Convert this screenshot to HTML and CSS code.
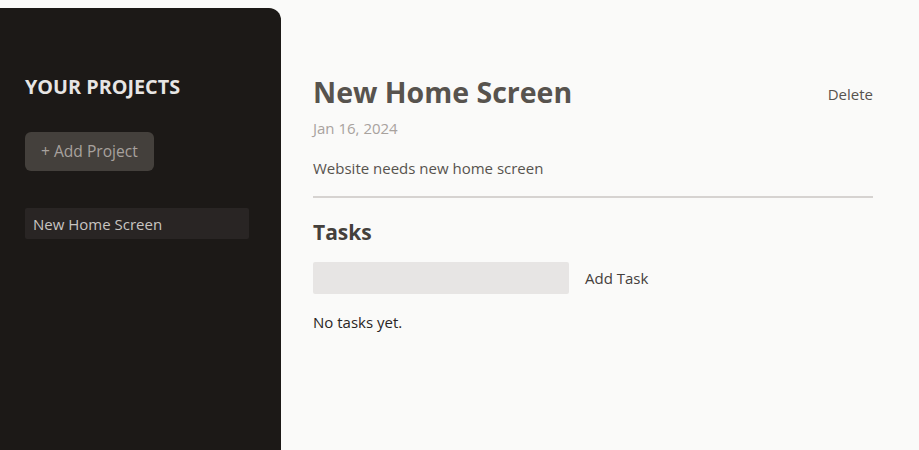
FILE: index.html
```html
<!DOCTYPE html>
<html lang="en">
<head>
<meta charset="utf-8">
<title>Projects</title>
<link rel="stylesheet" href="styles.css">
</head>
<body>
<main class="app">
  <aside class="sidebar">
    <h2 class="sidebar-title">Your Projects</h2>
    <div><button class="add-project">+ Add Project</button></div>
    <ul class="project-list">
      <li><button class="project-item">New Home Screen</button></li>
    </ul>
  </aside>
  <section class="project">
    <header class="project-header">
      <div class="title-row">
        <h1 class="project-title">New Home Screen</h1>
        <button class="delete">Delete</button>
      </div>
      <p class="project-date">Jan 16, 2024</p>
      <p class="project-desc">Website needs new home screen</p>
    </header>
    <h2 class="tasks-title">Tasks</h2>
    <div class="new-task">
      <input class="task-input" type="text">
      <button class="add-task">Add Task</button>
    </div>
    <p class="no-tasks">No tasks yet.</p>
  </section>
</main>
</body>
</html>
```
FILE: styles.css
```css
* { box-sizing: border-box; }
html, body { margin: 0; padding: 0; }
body {
  background: #fafaf9;
  font-family: "Open Sans", "Noto Sans", sans-serif;
  font-size: 16px;
  line-height: 24px;
  color: #1c1917;
  height: 450px;
  overflow: hidden;
}
button, input { font: inherit; border: 0; margin: 0; }
h1, h2, p, ul { margin: 0; padding: 0; }
ul { list-style: none; }

.app {
  display: flex;
  gap: 32px;
  margin-top: 8px;
  height: 442px;
}
.sidebar {
  width: 281px;
  flex: none;
  background: #1c1917;
  border-top-right-radius: 12px;
  padding: 65px 25px 0 25px;
}
.sidebar-title {
  text-transform: uppercase;
  font-size: 19.8px;
  line-height: 27px;
  font-weight: 700;
  color: #e7e5e4;
  margin-bottom: 32px;
}
.add-project {
  background: #44403c;
  color: #a8a29e;
  padding: 7px 16px 8px;
  border-radius: 6px;
  font-size: 15.6px;
  line-height: 24px;
}
.project-list { margin-top: 37px; }
.project-item {
  display: block;
  width: 224px;
  text-align: left;
  background: #292524;
  color: #c8c4c1;
  padding: 4px 8px 3px;
  border-radius: 2px;
  font-size: 15px;
}
.project {
  width: 560px;
  margin-top: 64px;
}
.project-header {
  padding-bottom: 16px;
  border-bottom: 2px solid #d6d3d1;
  margin-bottom: 16px;
}
.title-row {
  display: flex;
  justify-content: space-between;
  align-items: flex-start;
}
.project-title {
  font-size: 28.5px;
  line-height: 36px;
  font-weight: 700;
  color: #57534e;
  padding-top: 2px;
  margin-bottom: 6px;
}
.delete {
  background: none;
  color: #57534e;
  font-size: 15px;
  padding: 0;
  margin-top: 10px;
}
.project-date {
  color: #a8a29e;
  font-size: 15px;
  margin-bottom: 16px;
}
.project-desc {
  color: #57534e;
  font-size: 15px;
}
.tasks-title {
  font-size: 21px;
  line-height: 32px;
  font-weight: 700;
  color: #44403c;
  padding-top: 2px;
  margin-bottom: 14px;
}
.new-task {
  display: flex;
  align-items: center;
  gap: 16px;
}
.task-input {
  width: 256px;
  height: 32px;
  background: #e7e5e4;
  border-radius: 2px;
  padding: 4px 8px;
  outline: none;
}
.add-task {
  background: none;
  color: #44403c;
  padding: 0;
  font-size: 15px;
}
.no-tasks {
  color: #292524;
  margin-top: 16px;
  font-size: 15px;
}
```
